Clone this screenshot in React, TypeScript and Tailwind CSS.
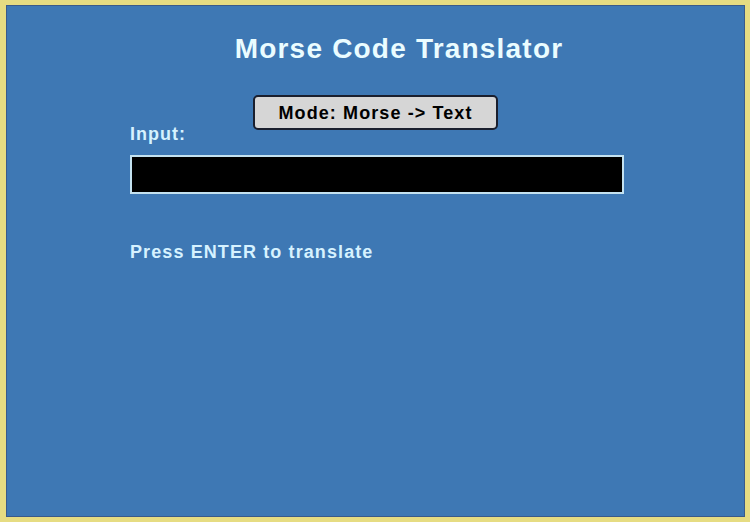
import React, { useState } from 'react';

const App = () => {
    const [mode, setMode] = useState<'morse' | 'text'>('morse');
    const [input, setInput] = useState('');

    return (
        <div
            className="w-[750px] h-[522px] bg-[#e6dc82] pt-[5px] pl-[6px] pr-[5px] pb-[5px]"
            style={{ fontFamily: '"Liberation Sans", Arial, sans-serif' }}
        >
            <div className="w-full h-full bg-[#3e78b4] border border-[#3a5a8a] flex flex-col">
                {/* title */}
                <h1 className="mt-[28px] pl-[47px] text-center text-[28px] leading-[30px] tracking-[1.2px] font-bold text-[#eafcff]">
                    Morse Code Translator
                </h1>

                {/* mode toggle */}
                <div className="flex justify-center mt-[31px]">
                    <button
                        onClick={() => setMode(mode === 'morse' ? 'text' : 'morse')}
                        className="w-[245px] h-[35px] bg-[#d6d6d6] border-2 border-[#1a1f2e] rounded-[5px] text-[18px] tracking-[1.1px] font-bold text-black leading-none"
                    >
                        {mode === 'morse' ? 'Mode: Morse -> Text' : 'Mode: Text -> Morse'}
                    </button>
                </div>

                {/* input */}
                <div className="pl-[123px] -mt-[5px]">
                    <label className="block text-[18px] leading-[18px] tracking-[1px] font-bold text-[#d6f2ff]">Input:</label>
                    <input
                        value={input}
                        onChange={(e) => setInput(e.target.value)}
                        className="mt-[12px] w-[494px] h-[39px] bg-black border-2 border-[#c4e2f0] text-white px-2 outline-none"
                    />
                    <p className="mt-[48px] text-[18px] leading-[20px] tracking-[1.1px] font-bold text-[#d6f2ff]">
                        Press ENTER to translate
                    </p>
                </div>
            </div>
        </div>
    );
};

export default App;
